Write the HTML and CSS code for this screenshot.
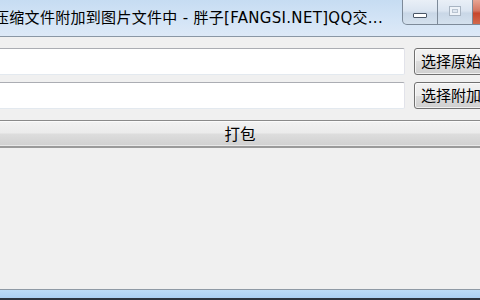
FILE: index.html
```html
<!DOCTYPE html>
<html lang="zh-CN">
<head>
<meta charset="utf-8">
<title>压缩文件附加到图片文件中</title>
<link rel="stylesheet" href="styles.css">
</head>
<body>
<div class="window">
  <header class="titlebar">
    <div class="title">压缩文件附加到图片文件中 - 胖子[FANGSI.NET]QQ交...</div>
    <div class="caption">
      <div class="cap cap-min"><span class="glyph-min"></span></div>
      <div class="cap cap-max"><span class="glyph-max"></span></div>
      <div class="cap cap-close"></div>
    </div>
  </header>
  <main class="client">
    <div class="row">
      <div class="textbox"></div>
      <div class="btn">选择原始图片</div>
    </div>
    <div class="row">
      <div class="textbox"></div>
      <div class="btn">选择附加文件</div>
    </div>
    <div class="packbar">打包</div>
    <div class="empty"></div>
  </main>
  <footer class="frame-bottom"></footer>
</div>
</body>
</html>
```

FILE: styles.css
```css
html, body {
  margin: 0;
  padding: 0;
  width: 480px;
  height: 300px;
  overflow: hidden;
  background: #f0f0f0;
  font-family: "Noto Sans CJK SC", "Noto Sans", sans-serif;
}

.window {
  display: flex;
  flex-direction: column;
  width: 480px;
  height: 300px;
}

.titlebar {
  position: relative;
  height: 37px;
  flex: 0 0 37px;
  background: linear-gradient(#c6dcf2 0%, #d3e4f6 55%, #dde9f7 100%);
  border-bottom: 1px solid #8a97a5;
  box-sizing: border-box;
}

.title {
  margin-left: -6px;
  padding-top: 8px;
  font-family: "DejaVu Sans", "Noto Sans CJK SC", sans-serif;
  font-size: 15px;
  letter-spacing: 0.3px;
  line-height: 20px;
  color: #000;
  white-space: nowrap;
}

.caption {
  position: absolute;
  top: 0;
  left: 402px;
  display: flex;
  height: 25px;
}

.cap {
  box-sizing: border-box;
  height: 25px;
  border: 1px solid #7d8a99;
  border-top: none;
  display: flex;
  align-items: center;
  justify-content: center;
}

.cap-min {
  width: 36px;
  border-bottom-left-radius: 5px;
  background: linear-gradient(#e9eff7 0%, #dbe5f1 45%, #c9d7e7 55%, #d4e1ee 100%);
}

.cap-max {
  width: 35px;
  border-left: none;
  background: linear-gradient(#e9eff7 0%, #dbe5f1 45%, #c9d7e7 55%, #d4e1ee 100%);
}

.cap-close {
  width: 50px;
  border-left: none;
  background: linear-gradient(#e8a493 0%, #d47560 45%, #c7462c 55%, #d2694c 100%);
}

.glyph-min {
  display: block;
  width: 12px;
  height: 3px;
  margin-top: 6px;
  background: #fff;
  border: 1px solid #4a5666;
  border-radius: 1px;
}

.glyph-max {
  display: block;
  box-sizing: border-box;
  width: 12px;
  height: 10px;
  margin-top: -3px;
  border: 1px solid #a8b4c2;
  background: #dfe7f1;
  box-shadow: inset 0 0 0 2px #eef3f9, inset 0 0 0 3px #b9c4d1;
}

.client {
  flex: 1 1 auto;
  display: flex;
  flex-direction: column;
  background: #f0f0f0;
  padding-top: 11px;
  box-sizing: border-box;
}

.row {
  display: grid;
  grid-template-columns: 409px 104px;
  column-gap: 9px;
  margin-left: -4px;
  margin-bottom: 7px;
  height: 27px;
}

.row + .row {
  margin-bottom: 11px;
}

.textbox {
  box-sizing: border-box;
  height: 27px;
  background: #fff;
  border: 1px solid #e2e3ea;
  border-top-color: #abadb3;
  border-bottom-color: #e3e9ef;
  border-radius: 2px;
}

.btn {
  box-sizing: border-box;
  height: 27px;
  border: 1px solid #707070;
  border-radius: 3px;
  background: linear-gradient(#f2f2f2 0%, #ebebeb 50%, #dddddd 50%, #cfcfcf 100%);
  box-shadow: inset 0 0 0 1px rgba(255, 255, 255, 0.7);
  font-size: 15px;
  line-height: 24px;
  text-align: center;
  color: #000;
  white-space: nowrap;
}

.packbar {
  box-sizing: border-box;
  height: 28px;
  margin: 0 -2px;
  border: 1px solid #8a8a8a;
  border-bottom: 2px solid #9a9a9a;
  background: linear-gradient(#f2f2f2 0%, #ebebeb 48%, #dddddd 52%, #d0d0d0 100%);
  box-shadow: inset 0 1px 0 #fbfbfb, inset 0 -1px 0 #e8e8e8;
  font-size: 15.5px;
  line-height: 25px;
  text-align: center;
  color: #000;
}

.empty {
  flex: 1 1 auto;
}

.frame-bottom {
  flex: 0 0 11px;
  box-sizing: border-box;
  border-top: 1px solid #8f9aa5;
  border-bottom: 2px solid #2d3540;
  background: linear-gradient(#bcdcf8, #acd0f3);
}
```
